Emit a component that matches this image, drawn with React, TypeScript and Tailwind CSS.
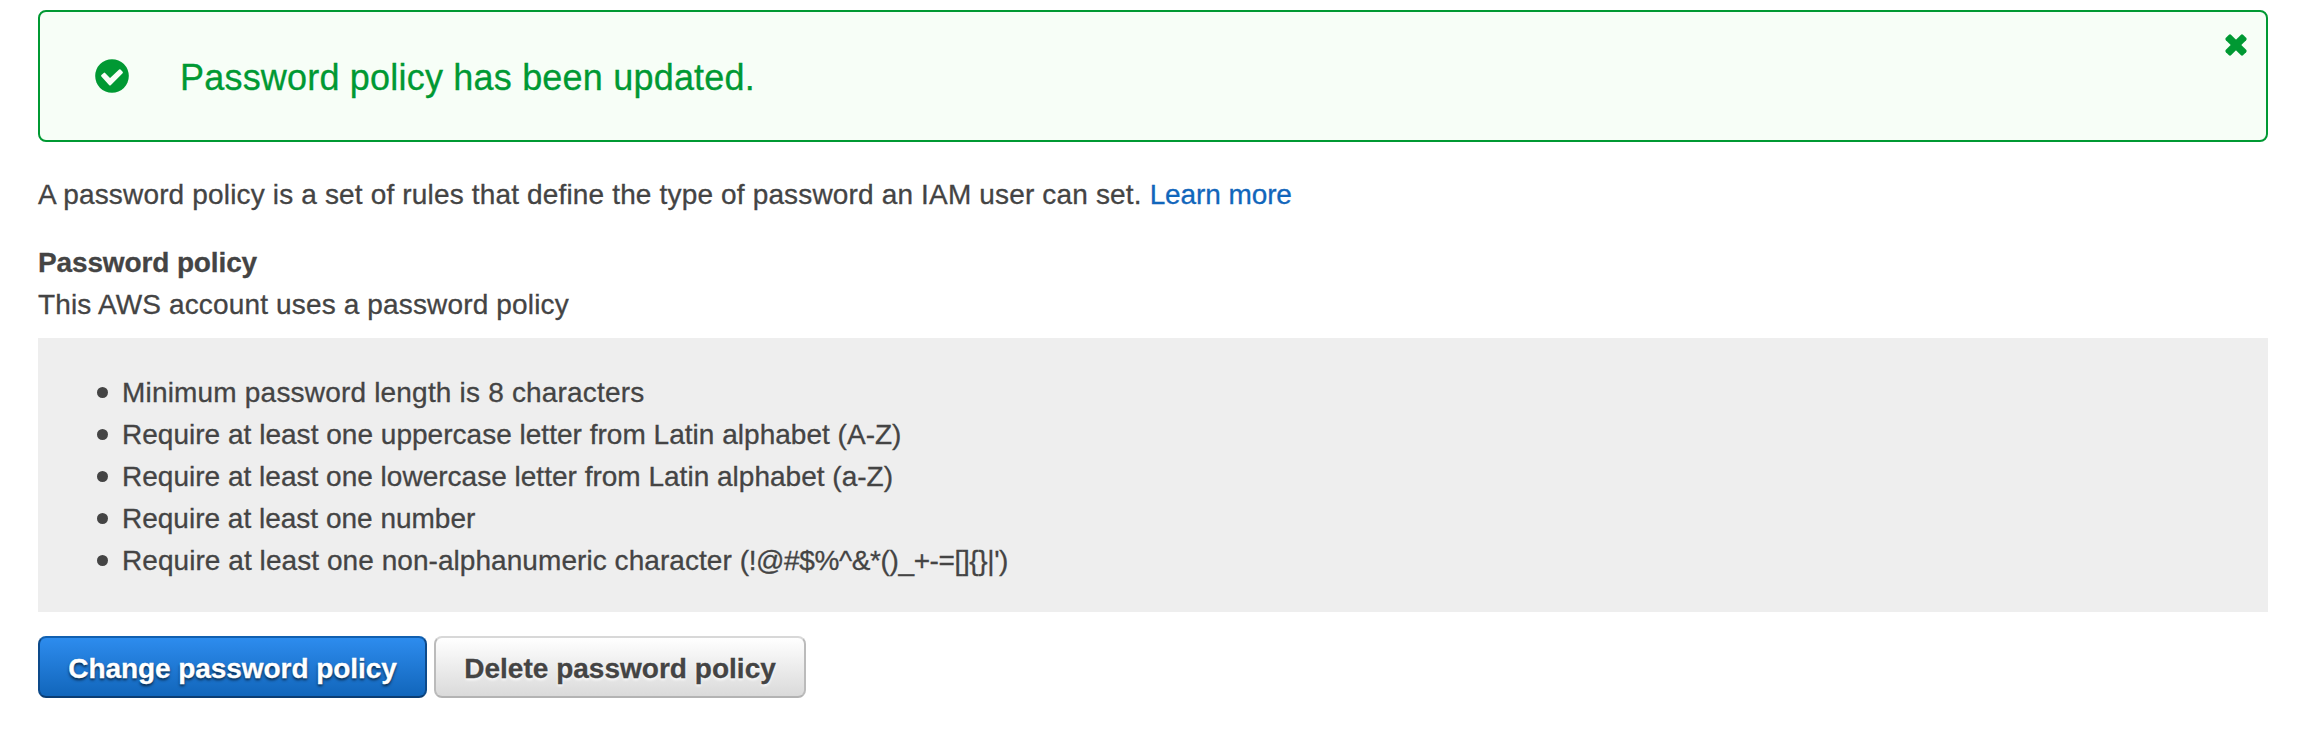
const rules = [
  { text: "Minimum password length is 8 characters", tracking: "tracking-[0.19px]" },
  { text: "Require at least one uppercase letter from Latin alphabet (A-Z)", tracking: "tracking-[0.02px]" },
  { text: "Require at least one lowercase letter from Latin alphabet (a-Z)", tracking: "tracking-[0.01px]" },
  { text: "Require at least one number", tracking: "tracking-normal" },
  {
    text: "Require at least one non-alphanumeric character ",
    symbols: "(!@#$%^&*()_+-=[]{}|')",
    tracking: "tracking-[0.06px]",
  },
];

function CheckCircle() {
  return (
    <svg viewBox="0 0 34 34" className="size-[34px]" aria-hidden="true">
      <circle cx="17" cy="17" r="16.8" fill="currentColor" />
      <path
        d="M7.1 16.8 9.4 14.6 15 20.5 24.8 11.2 26.9 13.5 15 25.5Z"
        fill="#f7fef7"
        stroke="#f7fef7"
        strokeWidth="2"
        strokeLinejoin="round"
      />
    </svg>
  );
}

function Cross() {
  return (
    <svg viewBox="-12 -12 24 24" className="mr-[18px] mt-[21px] size-[24px]" fill="currentColor" aria-hidden="true">
      <rect x="-12.3" y="-3.8" width="24.6" height="7.6" rx="1.8" transform="rotate(45)" />
      <rect x="-12.3" y="-3.8" width="24.6" height="7.6" rx="1.8" transform="rotate(-45)" />
    </svg>
  );
}

export default function App() {
  return (
    <main className="h-[752px] bg-white pl-[38px] pr-[44px] pt-[10px] font-['Liberation_Sans',sans-serif] text-[28px] leading-[42px] text-[#444] [-webkit-text-stroke:0.3px]">
      <div className="flex h-[132px] justify-between rounded-[8px] border-2 border-[#009933] bg-[#f7fef7] text-[#009933]">
        <div className="flex items-center pl-[55px]">
          <CheckCircle />
          <span className="pl-[51px] pt-[3px] text-[36px] tracking-[0.2px]">Password policy has been updated.</span>
        </div>
        <Cross />
      </div>
      <p className="mt-[32px]">
        <span className="tracking-[0.16px]">A password policy is a set of rules that define the type of password an IAM user can set. </span>
        <a className="tracking-[-0.1px] text-[#1166bb]">Learn more</a>
      </p>
      <h2 className="mt-[26px] font-bold tracking-[-0.13px]">Password policy</h2>
      <p className="tracking-[0.15px]">This AWS account uses a password policy</p>
      <ul className="mt-[12px] h-[274px] bg-[#eee] pl-[59px] pt-[34px]">
        {rules.map((rule) => (
          <li key={rule.text} className="flex items-center">
            <span className="mb-px mr-[14px] size-[11px] rounded-full bg-[#444]" />
            <span className={rule.tracking}>
              {rule.text}
              {rule.symbols && <span className="tracking-[-0.38px]">{rule.symbols}</span>}
            </span>
          </li>
        ))}
      </ul>
      <div className="mt-[24px] flex gap-[7px] font-bold">
        <button className="h-[62px] w-[389px] rounded-[8px] border-2 border-x-[#0d4a8a] border-b-[#0a3d73] border-t-[#1160b0] bg-linear-to-b from-[#2d8cee] to-[#1166bb] pt-[3px] tracking-[-0.06px] text-white [text-shadow:0_2px_3px_rgba(0,0,0,0.7)]">
          Change password policy
        </button>
        <button className="h-[62px] w-[372px] rounded-[8px] border-2 border-x-[#bbb] border-b-[#b3b3b3] border-t-[#d8d8d8] bg-linear-to-b from-white to-[#dadada] pt-[3px] tracking-[0.02px] [text-shadow:0_2px_3px_rgba(255,255,255,0.9)]">
          Delete password policy
        </button>
      </div>
    </main>
  );
}
